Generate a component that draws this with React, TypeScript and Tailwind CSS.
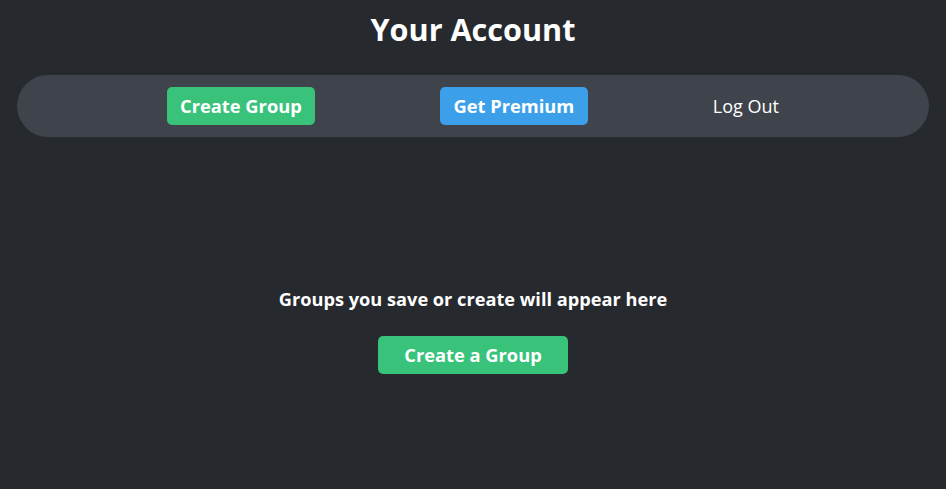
export default function App() {
  return (
    <div className="min-h-[489px] w-full bg-[#26292e] text-white" style={{ fontFamily: '"Open Sans", sans-serif' }}>
      <h1 className="pt-[9px] text-center text-[30.6px] font-bold leading-[41px]">Your Account</h1>
      <nav className="mx-[17px] mt-[25px] flex h-[62px] items-center justify-evenly rounded-full bg-[#3f434b] px-[25px]">
        <button className="h-[38px] w-[148px] rounded-[5px] bg-[#39c27a] text-[18.3px] font-bold">Create Group</button>
        <button className="h-[38px] w-[148px] rounded-[5px] bg-[#3c9fea] text-[18.3px] font-bold">Get Premium</button>
        <button className="h-[38px] text-[18px]">Log Out</button>
      </nav>
      <div className="mt-[149px] flex flex-col items-center">
        <p className="text-[18.2px] font-bold leading-[26px]">Groups you save or create will appear here</p>
        <button className="mt-[24px] h-[38px] w-[190px] rounded-[5px] bg-[#39c27a] text-[18.3px] font-bold">Create a Group</button>
      </div>
    </div>
  );
}
